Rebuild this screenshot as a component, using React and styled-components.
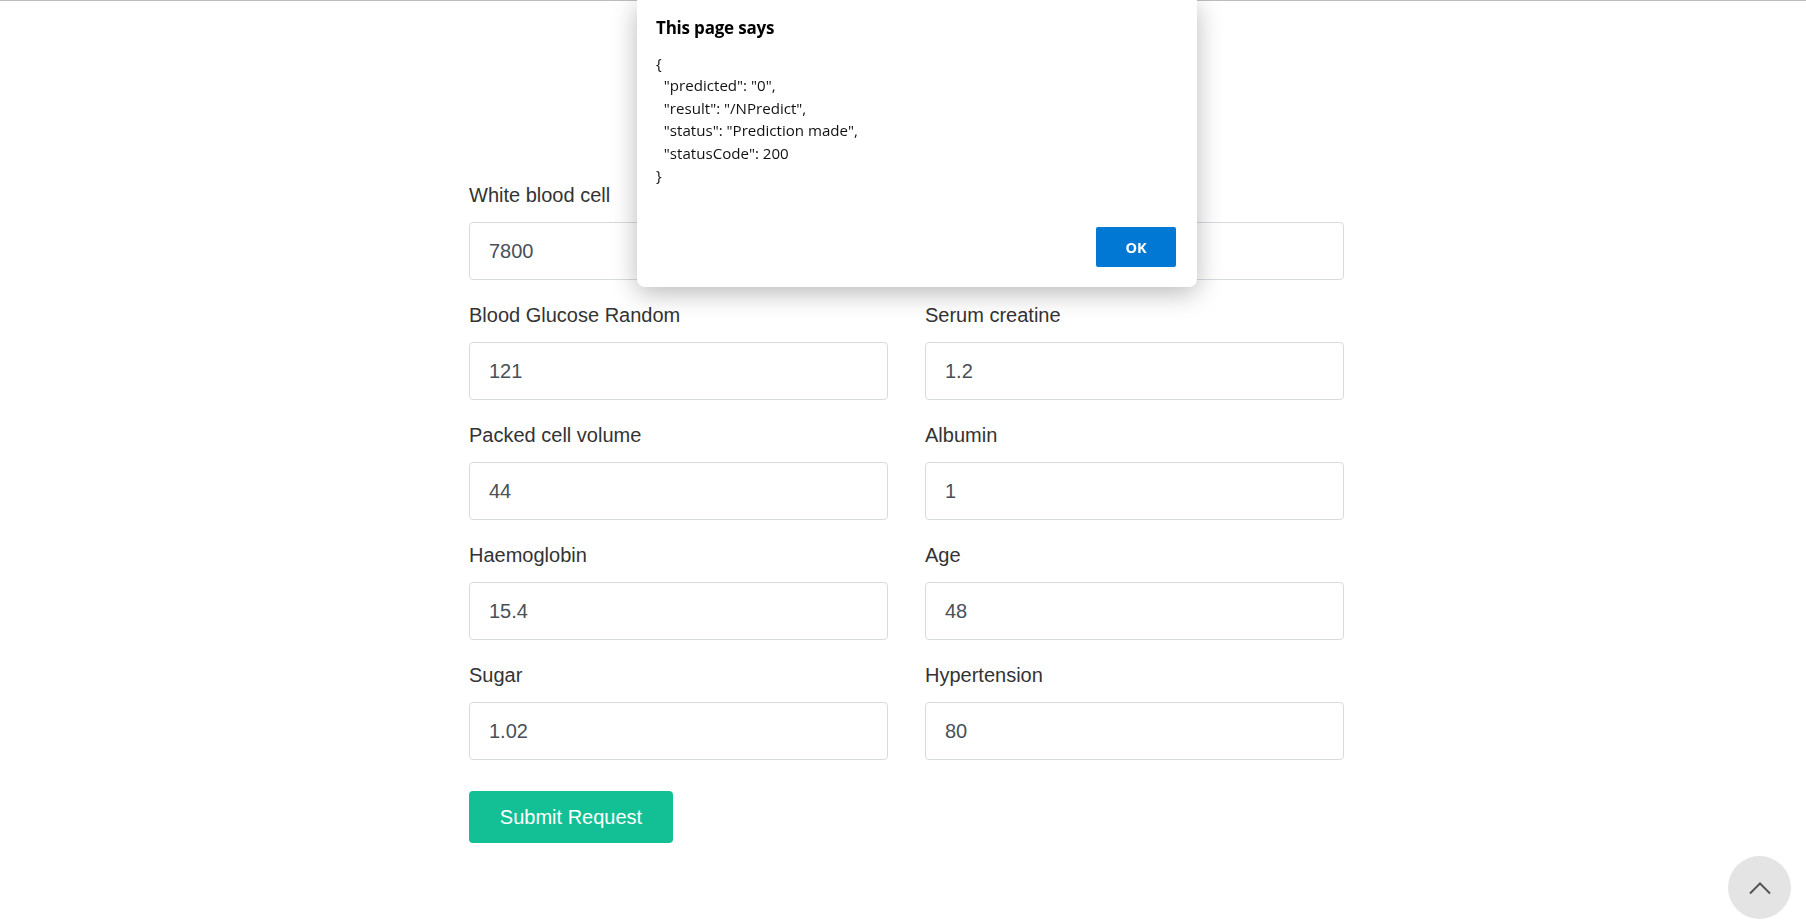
import React from "react";
import styled, { createGlobalStyle } from "styled-components";

const GlobalStyle = createGlobalStyle`
  * {
    box-sizing: border-box;
  }

  body {
    margin: 0;
    background: #fff;
    font-family: "Liberation Sans", Arial, sans-serif;
    border-top: 1px solid #bdbdbd;
  }
`;

const Page = styled.div`
  min-height: 922px;
  position: relative;
`;

const Form = styled.form`
  width: 875px;
  margin-left: 469px;
  padding-top: 179px;
`;

const Grid = styled.div`
  display: grid;
  grid-template-columns: 419px 419px;
  column-gap: 37px;
  row-gap: 20px;
`;

const Field = styled.div`
  display: flex;
  flex-direction: column;
`;

const Label = styled.label`
  font-size: 20px;
  line-height: 30px;
  color: #333;
  margin-bottom: 12px;
`;

const Input = styled.input`
  height: 58px;
  padding: 0 19px;
  border: 1px solid #d8dbde;
  border-radius: 4px;
  font-family: "Liberation Sans", Arial, sans-serif;
  font-size: 20px;
  color: #495057;
  background: #fff;
  outline: none;
`;

const SubmitButton = styled.button`
  margin-top: 31px;
  width: 204px;
  height: 52px;
  border: none;
  border-radius: 4px;
  background: #13bf94;
  color: #fff;
  font-family: "Liberation Sans", Arial, sans-serif;
  font-size: 20px;
  cursor: pointer;
`;

const ScrollTop = styled.button`
  position: fixed;
  right: 15px;
  bottom: 4px;
  width: 63px;
  height: 63px;
  border-radius: 50%;
  border: none;
  background: #e4e4e4;
  display: flex;
  align-items: center;
  justify-content: center;
  padding: 0;
`;

const Dialog = styled.div`
  position: fixed;
  top: 0;
  left: 637px;
  width: 560px;
  height: 287px;
  background: #fff;
  border-radius: 0 0 8px 8px;
  box-shadow: 0 6px 26px rgba(0, 0, 0, 0.28);
  padding: 18px 21px 20px 19px;
  display: flex;
  flex-direction: column;
  font-family: "Open Sans", "Noto Sans", sans-serif;
  z-index: 10;
`;

const DialogTitle = styled.div`
  font-size: 17px;
  font-weight: 700;
  line-height: 20px;
  color: #000;
  letter-spacing: -0.2px;
`;

const DialogBody = styled.pre`
  margin: 14px 0 0;
  font-family: "Open Sans", "Noto Sans", sans-serif;
  font-size: 15.1px;
  line-height: 22.4px;
  color: #111;
  white-space: pre;
  flex: 1;
`;

const DialogFooter = styled.div`
  display: flex;
  justify-content: flex-end;
`;

const OkButton = styled.button`
  width: 80px;
  height: 40px;
  border: none;
  border-radius: 2px;
  background: #0078d4;
  color: #fff;
  font-family: "Open Sans", "Noto Sans", sans-serif;
  font-size: 14.5px;
  font-weight: 700;
`;

const fields = [
  ["White blood cell", "7800"],
  ["Red blood cell", "5.2"],
  ["Blood Glucose Random", "121"],
  ["Serum creatine", "1.2"],
  ["Packed cell volume", "44"],
  ["Albumin", "1"],
  ["Haemoglobin", "15.4"],
  ["Age", "48"],
  ["Sugar", "1.02"],
  ["Hypertension", "80"],
];

const message = `{
  "predicted": "0",
  "result": "/NPredict",
  "status": "Prediction made",
  "statusCode": 200
}`;

export default function App() {
  return (
    <Page>
      <GlobalStyle />
      <Form onSubmit={(e) => e.preventDefault()}>
        <Grid>
          {fields.map(([label, value]) => (
            <Field key={label}>
              <Label>{label}</Label>
              <Input defaultValue={value} />
            </Field>
          ))}
        </Grid>
        <SubmitButton type="submit">Submit Request</SubmitButton>
      </Form>

      <ScrollTop aria-label="Back to top">
        <svg width="24" height="14" viewBox="0 0 24 14" fill="none">
          <path d="M2 12.5 L12 2.5 L22 12.5" stroke="#555" strokeWidth="2" />
        </svg>
      </ScrollTop>

      <Dialog role="alertdialog">
        <DialogTitle>This page says</DialogTitle>
        <DialogBody>{message}</DialogBody>
        <DialogFooter>
          <OkButton>OK</OkButton>
        </DialogFooter>
      </Dialog>
    </Page>
  );
}
